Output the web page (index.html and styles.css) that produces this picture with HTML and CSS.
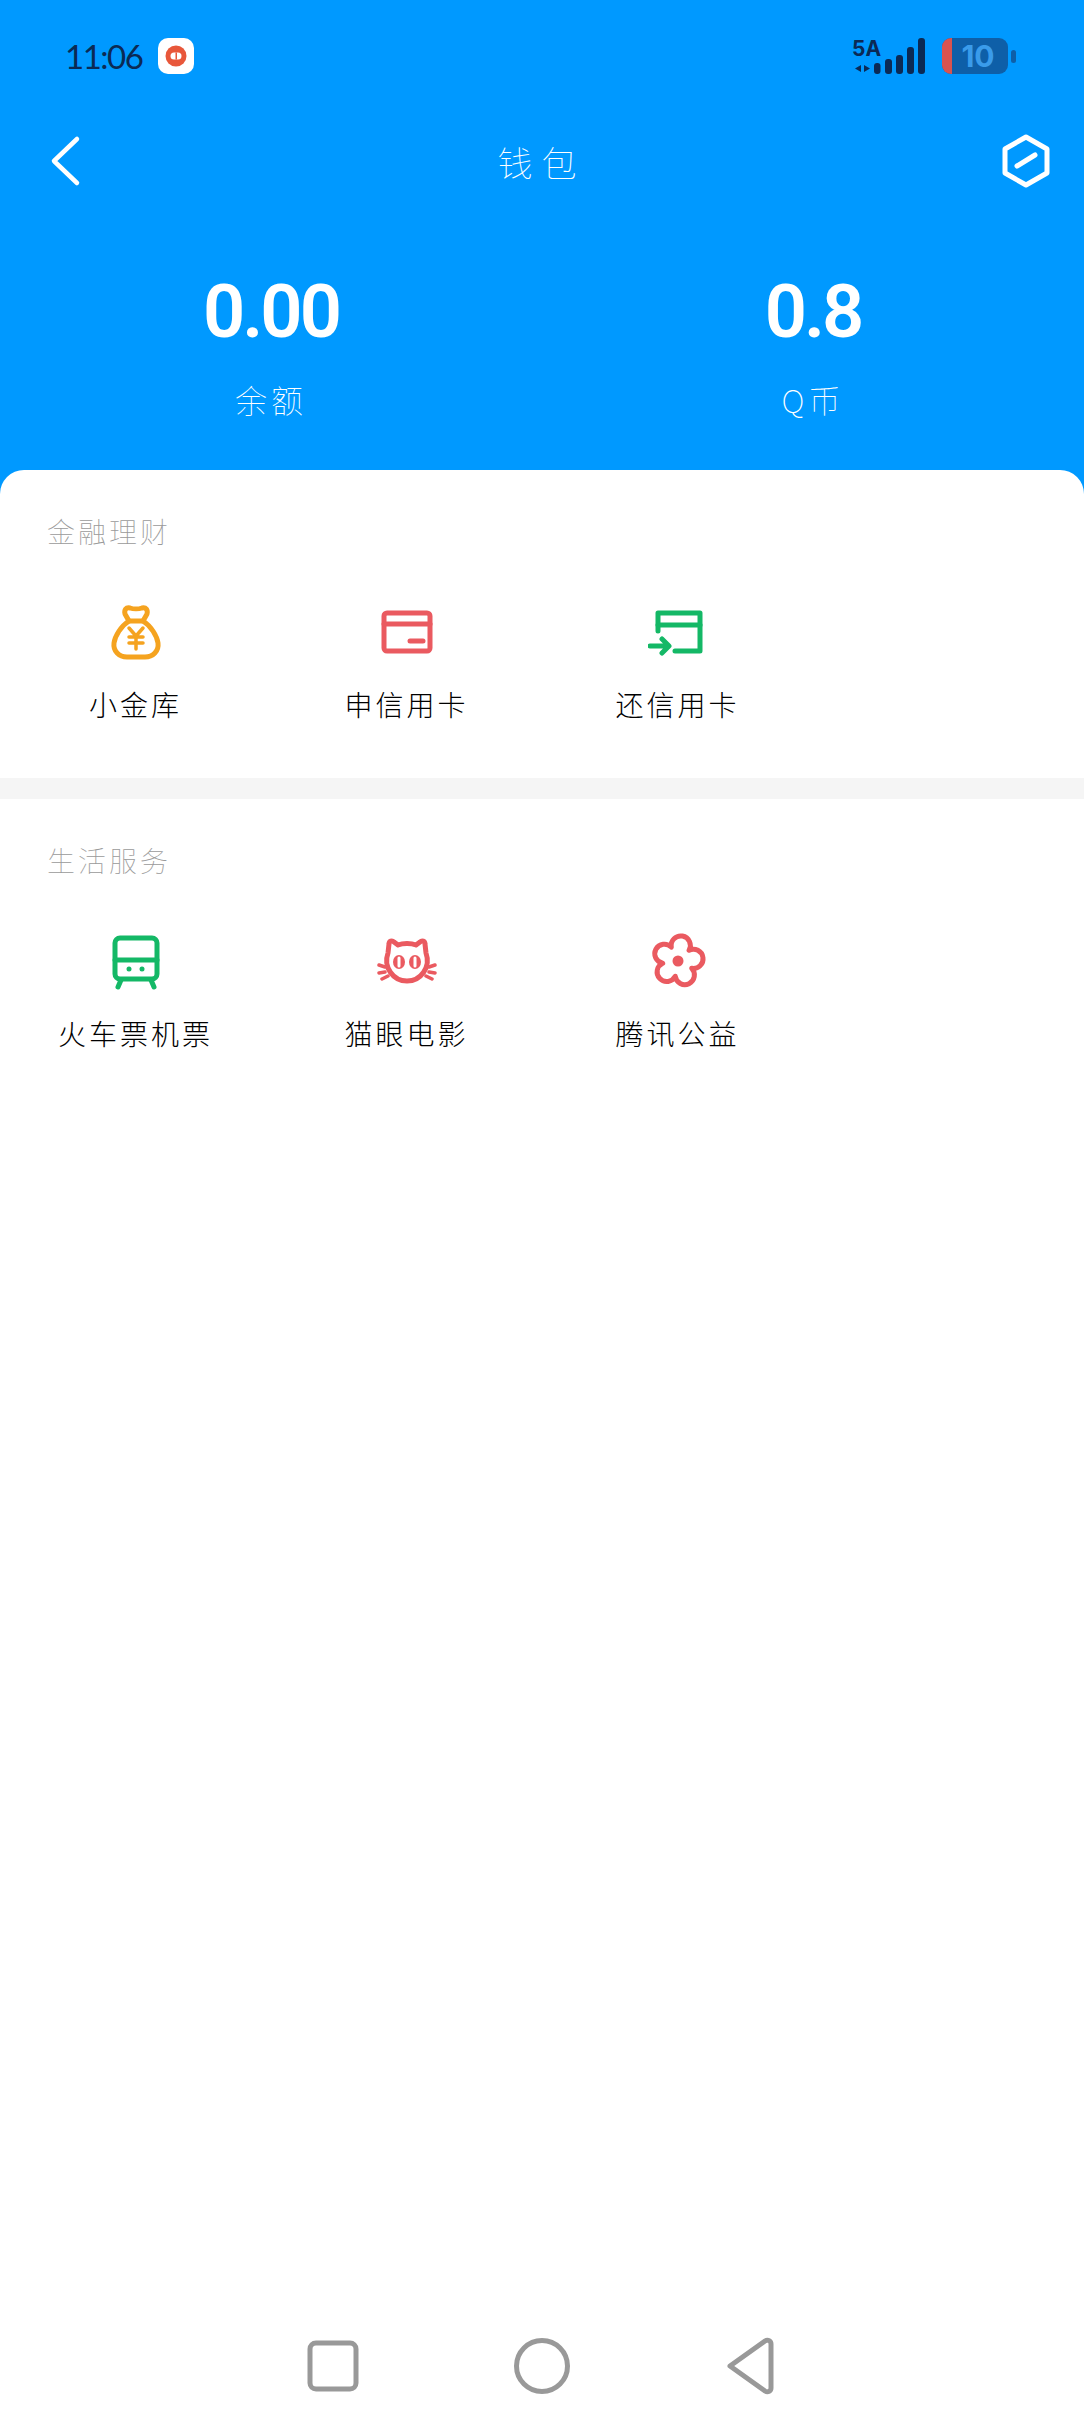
FILE: index.html
```html
<!DOCTYPE html>
<html lang="zh-CN">
<head>
  <meta charset="UTF-8">
  <title>钱包</title>
  <link rel="stylesheet" href="styles.css">
</head>
<body>

<header class="hero">
  <div class="status">
    <div class="status-left">
      <span class="clock">11:06</span>
      <span class="app-badge">
        <svg width="36" height="36" viewBox="0 0 36 36">
          <circle cx="18" cy="18" r="10.500" fill="#e8573a"/>
          <rect x="12.500" y="14.500" width="11" height="7" rx="3.500" fill="#fff"/>
          <rect x="17.500" y="14.500" width="1.500" height="7" fill="#e8573a"/>
        </svg>
      </span>
    </div>
    <div class="status-right">
      <svg width="90" height="38" viewBox="0 0 90 38">
        <text x="0" y="19" class="net-text">5A</text>
        <path d="M3 31.500L9 28V35ZM12 28L18 31.500L12 35Z" fill="#0b2a55"/>
        <g fill="#0b2a55">
          <rect x="22" y="26" width="6.500" height="11" rx="3"/>
          <rect x="33" y="22" width="7" height="15" rx="3"/>
          <rect x="44" y="18" width="7" height="19" rx="3"/>
          <rect x="55" y="10" width="7" height="27" rx="3"/>
          <rect x="66" y="1" width="7" height="36" rx="3"/>
        </g>
      </svg>
      <div class="battery">
        <div class="battery-body"><span class="battery-low"></span><span class="battery-num">10</span></div>
        <span class="battery-nub"></span>
      </div>
    </div>
  </div>

  <div class="titlebar">
    <svg width="32" height="52" viewBox="0 0 32 52"><path d="M27 4L4 26l23 22" fill="none" stroke="#fff" stroke-width="4.500" stroke-linecap="round" stroke-linejoin="round"/></svg>
    <h1 class="title">钱包</h1>
    <svg width="50" height="54" viewBox="0 0 50 54">
      <path d="M25 3L46 15V39L25 51L4 39V15Z" fill="none" stroke="#fff" stroke-width="5" stroke-linejoin="round"/>
      <path d="M16 32L34 21" fill="none" stroke="#fff" stroke-width="5" stroke-linecap="round"/>
    </svg>
  </div>

  <div class="stats">
    <div class="stat"><div class="stat-num">0.00</div><div class="stat-name">余额</div></div>
    <div class="stat"><div class="stat-num">0.8</div><div class="stat-name">Q币</div></div>
  </div>
</header>

<main class="panel">
  <section class="group">
    <h2 class="group-title">金融理财</h2>
    <div class="grid">
      <a class="item">
        <svg class="icon orange" viewBox="0 0 60 60">
          <path d="M23 19C15 24 9 34 8 41C7 49 13 55 21 55H39C47 55 53 49 52 41C51 34 45 24 37 19Z"/>
          <path d="M23 19L19 12C18 8 20 5 24 6C27 7 33 7 36 6C40 5 42 8 41 12L37 19"/>
          <path class="thin" d="M23 26L30 34L37 26M30 34V47M23 35H37M23 41H37"/>
        </svg>
        <span class="item-name">小金库</span>
      </a>
      <a class="item">
        <svg class="icon red" viewBox="0 0 60 60">
          <rect x="7" y="11" width="46" height="38" rx="3"/>
          <path d="M7 22H53"/>
          <path d="M33 39H46"/>
        </svg>
        <span class="item-name">申信用卡</span>
      </a>
      <a class="item">
        <svg class="icon green" viewBox="0 0 60 60">
          <path d="M10 29V11H52V49H27"/>
          <path d="M10 23H52"/>
          <path d="M2 44H20M14 37L21 44L14 51"/>
        </svg>
        <span class="item-name">还信用卡</span>
      </a>
    </div>
  </section>

  <div class="divider"></div>

  <section class="group">
    <h2 class="group-title">生活服务</h2>
    <div class="grid">
      <a class="item">
        <svg class="icon green" viewBox="0 0 60 60">
          <rect x="9" y="7" width="42" height="41" rx="5"/>
          <path d="M9 29H51"/>
          <path d="M15 49L12 56M45 49L48 56"/>
          <circle class="dot" cx="23" cy="38" r="2.500"/>
          <circle class="dot" cx="36" cy="38" r="2.500"/>
        </svg>
        <span class="item-name">火车票机票</span>
      </a>
      <a class="item">
        <svg class="icon red" viewBox="0 0 60 60">
          <path d="M11 22L12 13C12 10 15 9 17 11L21 14C26 12 34 12 39 14L43 11C45 9 48 10 48 13L49 22C54 36 44 50 30 50C16 50 6 36 11 22Z"/>
          <ellipse class="dot" cx="22" cy="31" rx="6" ry="7"/>
          <ellipse class="dot" cx="38" cy="31" rx="6" ry="7"/>
          <path class="slit" d="M22 27V35M38 27V35"/>
          <path class="thin" d="M8 36L2 34M8 41L2 42M11 45L5 48M52 36L58 34M52 41L58 42M49 45L55 48"/>
        </svg>
        <span class="item-name">猫眼电影</span>
      </a>
      <a class="item">
        <svg class="icon red" viewBox="0 0 60 60">
          <path d="M23.300 16.100A9.600 9.600 0 1 1 41.100 19.300A9.600 9.600 0 1 1 43.700 37.300A9.600 9.600 0 1 1 27.300 45.200A9.600 9.600 0 1 1 14.700 32.200A9.600 9.600 0 1 1 23.300 16.100Z"/>
          <circle class="dot" cx="30" cy="30" r="5.500"/>
        </svg>
        <span class="item-name">腾讯公益</span>
      </a>
    </div>
  </section>

  <nav class="navbar">
    <svg width="56" height="56" viewBox="0 0 56 56"><rect x="5" y="5" width="46" height="46" rx="6" fill="none" stroke="#999" stroke-width="5"/></svg>
    <svg width="60" height="60" viewBox="0 0 60 60"><circle cx="30" cy="30" r="25.500" fill="none" stroke="#999" stroke-width="5"/></svg>
    <svg width="52" height="62" viewBox="0 0 52 62"><path d="M7 31L42 6C45 4 48 6 48 9V53C48 56 45 58 42 56Z" fill="none" stroke="#999" stroke-width="5" stroke-linejoin="round"/></svg>
  </nav>
</main>

</body>
</html>
```

FILE: styles.css
```css
* {
  box-sizing: border-box;
}
html, body {
  margin: 0;
  height: 100%;
}
body {
  width: 1084px;
  height: 2412px;
  display: flex;
  flex-direction: column;
  font-family: "Noto Sans CJK SC", "Noto Sans", sans-serif;
  background-color: #0099ff;
}
h1, h2 {
  margin: 0;
  font-weight: 100;
}

/* blue top part */
.hero {
  height: 470px;
  flex-shrink: 0;
  color: white;
}
.status {
  display: flex;
  justify-content: space-between;
  align-items: center;
  height: 36px;
  margin-top: 38px;
  padding: 0 68px 0 65px;
}
.status-left {
  display: flex;
  align-items: center;
  gap: 16px;
}
.clock {
  font-family: Lato, sans-serif;
  font-size: 33px;
  font-weight: 400;
  color: #0b2a55;
  letter-spacing: -1.5px;
}
.app-badge {
  display: flex;
  width: 36px;
  height: 36px;
  background-color: white;
  border-radius: 10px;
}
.status-right {
  display: flex;
  align-items: center;
}
.net-text {
  font-family: Inter, sans-serif;
  font-size: 21px;
  font-weight: 700;
  fill: #0b2a55;
}
.battery {
  display: flex;
  align-items: center;
  gap: 3px;
}
.battery-body {
  position: relative;
  display: flex;
  align-items: center;
  justify-content: center;
  width: 66px;
  height: 36px;
  padding-left: 6px;
  background-color: #0e5fa8;
  border-radius: 9px;
  overflow: hidden;
}
.battery-low {
  position: absolute;
  left: 0;
  top: 0;
  bottom: 0;
  width: 10px;
  background-color: #d9534f;
}
.battery-num {
  font-family: Inter, sans-serif;
  font-size: 30px;
  font-weight: 700;
  color: #3a9bea;
}
.battery-nub {
  width: 5px;
  height: 13px;
  background-color: #0e5fa8;
  border-radius: 3px;
}
.titlebar {
  display: flex;
  justify-content: space-between;
  align-items: center;
  height: 54px;
  margin-top: 60px;
  padding: 0 33px 0 50px;
}
.title {
  font-size: 35px;
  letter-spacing: 9px;
  color: white;
}
.stats {
  display: flex;
  margin-top: 82px;
}
.stat {
  width: 50%;
  text-align: center;
}
.stat-num {
  font-family: Roboto, sans-serif;
  font-size: 74px;
  font-weight: 600;
  line-height: 84px;
  letter-spacing: -3px;
}
.stat-name {
  margin-top: 23px;
  font-size: 32px;
  font-weight: 100;
  line-height: 44px;
  letter-spacing: 4px;
}

/* white part */
.panel {
  flex: 1;
  display: flex;
  flex-direction: column;
  background-color: white;
  border-radius: 24px 24px 0 0;
}
.group {
  padding: 41px 0 54px;
}
.divider {
  height: 21px;
  flex-shrink: 0;
  background-color: #f5f5f5;
}
.group-title {
  padding-left: 47px;
  font-size: 28px;
  line-height: 40px;
  letter-spacing: 3px;
  color: #9a9a9a;
}
.grid {
  display: grid;
  grid-template-columns: repeat(4, 1fr);
  margin-top: 51px;
}
.item {
  display: flex;
  flex-direction: column;
  align-items: center;
  gap: 22px;
}
.icon {
  display: block;
  width: 60px;
  height: 60px;
  fill: none;
  stroke-width: 5;
  stroke-linecap: round;
  stroke-linejoin: round;
}
.icon .thin {
  stroke-width: 3.500;
}
.icon .dot {
  stroke: none;
}
.icon .slit {
  stroke: white;
  stroke-width: 3;
}
.orange {
  stroke: #f5a31f;
}
.red {
  stroke: #ea5a60;
}
.red .dot {
  fill: #ea5a60;
}
.green {
  stroke: #14b866;
}
.green .dot {
  fill: #14b866;
}
.item-name {
  font-size: 28px;
  font-weight: 300;
  line-height: 40px;
  letter-spacing: 3px;
  color: #000;
}
.navbar {
  display: flex;
  justify-content: center;
  align-items: center;
  gap: 151px;
  margin-top: auto;
  padding: 0 4px 15px 0;
}
```
